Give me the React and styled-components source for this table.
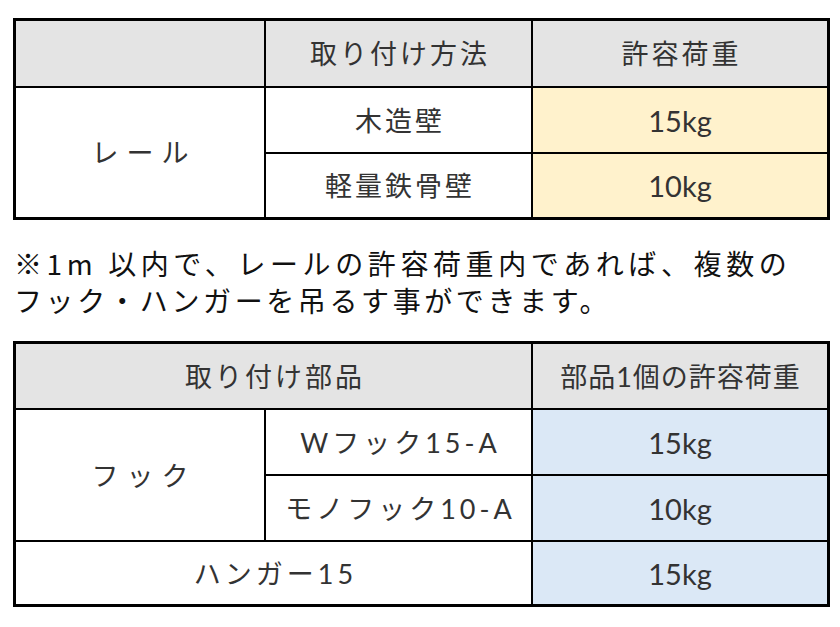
import React from "react";
import styled, { createGlobalStyle } from "styled-components";

const GlobalStyle = createGlobalStyle`
  html, body { margin: 0; padding: 0; background: #ffffff; }
  body { font-family: "Noto Sans CJK JP", "Noto Sans", sans-serif; }
`;

const Page = styled.div`
  padding: 18px 0 0 13px;
  width: 817px;
`;

const Grid = styled.div`
  display: grid;
  grid-template-columns: 248px 265px 294px;
  grid-template-rows: ${(p) => p.$rows};
  gap: 2px;
  background: #000;
  border: 3px solid #000;
`;

const Cell = styled.div`
  display: flex;
  align-items: center;
  justify-content: center;
  background: ${(p) => p.$bg || "#ffffff"};
  grid-column: ${(p) => (p.$colSpan ? `span ${p.$colSpan}` : "auto")};
  grid-row: ${(p) => (p.$rowSpan ? `span ${p.$rowSpan}` : "auto")};
  font-family: Lato, "Noto Sans CJK JP", sans-serif;
  font-size: ${(p) => (p.$latin ? 29 : 27)}px;
  letter-spacing: ${(p) => p.$ls ?? 3}px;
  padding-left: ${(p) => p.$ls ?? 3}px;
  color: #333;
  line-height: 1;
`;

const Note = styled.div`
  margin: 25px 0 22px 1px;
  font-family: "Noto Sans CJK JP", sans-serif;
  font-weight: 400;
  font-size: 28px;
  letter-spacing: 4px;
  color: #111;
  white-space: nowrap;
`;

const NoteLine = styled.div`
  height: 37px;
  line-height: 37px;
  letter-spacing: ${(p) => p.$ls}px;
`;

const HEAD = "#e4e4e4";
const YELLOW = "#fff2cc";
const BLUE = "#dbe8f6";

export default function App() {
  return (
    <>
      <GlobalStyle />
      <Page>
        <Grid $rows="65px 64px 63px">
          <Cell $bg={HEAD} />
          <Cell $bg={HEAD}>取り付け方法</Cell>
          <Cell $bg={HEAD}>許容荷重</Cell>
          <Cell $rowSpan={2} $ls={8}>レール</Cell>
          <Cell>木造壁</Cell>
          <Cell $bg={YELLOW} $ls={0} $latin>15kg</Cell>
          <Cell>軽量鉄骨壁</Cell>
          <Cell $bg={YELLOW} $ls={0} $latin>10kg</Cell>
        </Grid>
        <Note>
          <NoteLine $ls={4.6}>※1m 以内で、レールの許容荷重内であれば、複数の</NoteLine>
          <NoteLine $ls={3.6}>フック・ハンガーを吊るす事ができます。</NoteLine>
        </Note>
        <Grid $rows="64px 64px 64px 62px">
          <Cell $bg={HEAD} $colSpan={2}>取り付け部品</Cell>
          <Cell $bg={HEAD} $ls={1}>部品1個の許容荷重</Cell>
          <Cell $rowSpan={2} $ls={8}>フック</Cell>
          <Cell $ls={4}>Wフック15-A</Cell>
          <Cell $bg={BLUE} $ls={0} $latin>15kg</Cell>
          <Cell $ls={4}>モノフック10-A</Cell>
          <Cell $bg={BLUE} $ls={0} $latin>10kg</Cell>
          <Cell $colSpan={2} $ls={4}>ハンガー15</Cell>
          <Cell $bg={BLUE} $ls={0} $latin>15kg</Cell>
        </Grid>
      </Page>
    </>
  );
}
